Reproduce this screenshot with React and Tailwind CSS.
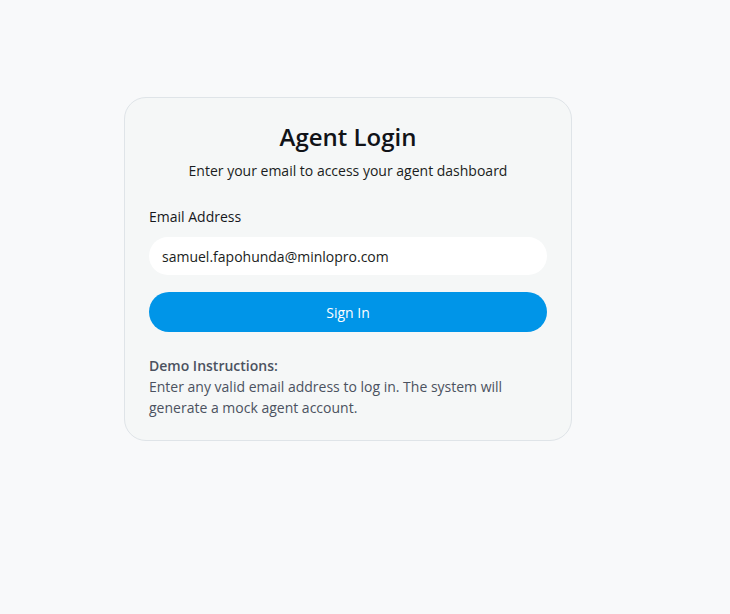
import React, { useState } from "react";

export default function App() {
  const [email, setEmail] = useState("samuel.fapohunda@minlopro.com");

  return (
    <div
      className="min-h-screen w-full bg-[#f8f9fa] pt-[97px] pl-[124px]"
      style={{ fontFamily: '"Open Sans", "Noto Sans", sans-serif' }}
    >
      {/* Login card */}
      <div className="w-[448px] rounded-[22px] border border-[#dfe4e8] bg-[#f5f7f7] px-6 pt-[23px] pb-[22px]">
        <h1 className="text-center text-[24px] leading-8 font-semibold text-[#111318]">
          Agent Login
        </h1>
        <p className="mt-2 text-center text-[14px] leading-5 text-[#1a1d21]">
          Enter your email to access your agent dashboard
        </p>

        <label className="mt-[26px] block text-[14px] leading-5 font-medium text-[#15181c]">
          Email Address
        </label>
        <input
          type="email"
          value={email}
          onChange={(e) => setEmail(e.target.value)}
          className="mt-[10px] block h-[38px] w-full rounded-full bg-white px-[13px] text-[14px] text-[#1a1d21] outline-none"
        />

        <button className="mt-[17px] flex h-10 w-full items-center justify-center rounded-full bg-[#0095e8] text-[14px] text-white">
          Sign In
        </button>

        <div className="mt-6 text-[14px] text-[#4b5260]">
          <p className="leading-5 font-semibold">Demo Instructions:</p>
          <p className="leading-[21px]">
            Enter any valid email address to log in. The system will generate a
            mock agent account.
          </p>
        </div>
      </div>
    </div>
  );
}
